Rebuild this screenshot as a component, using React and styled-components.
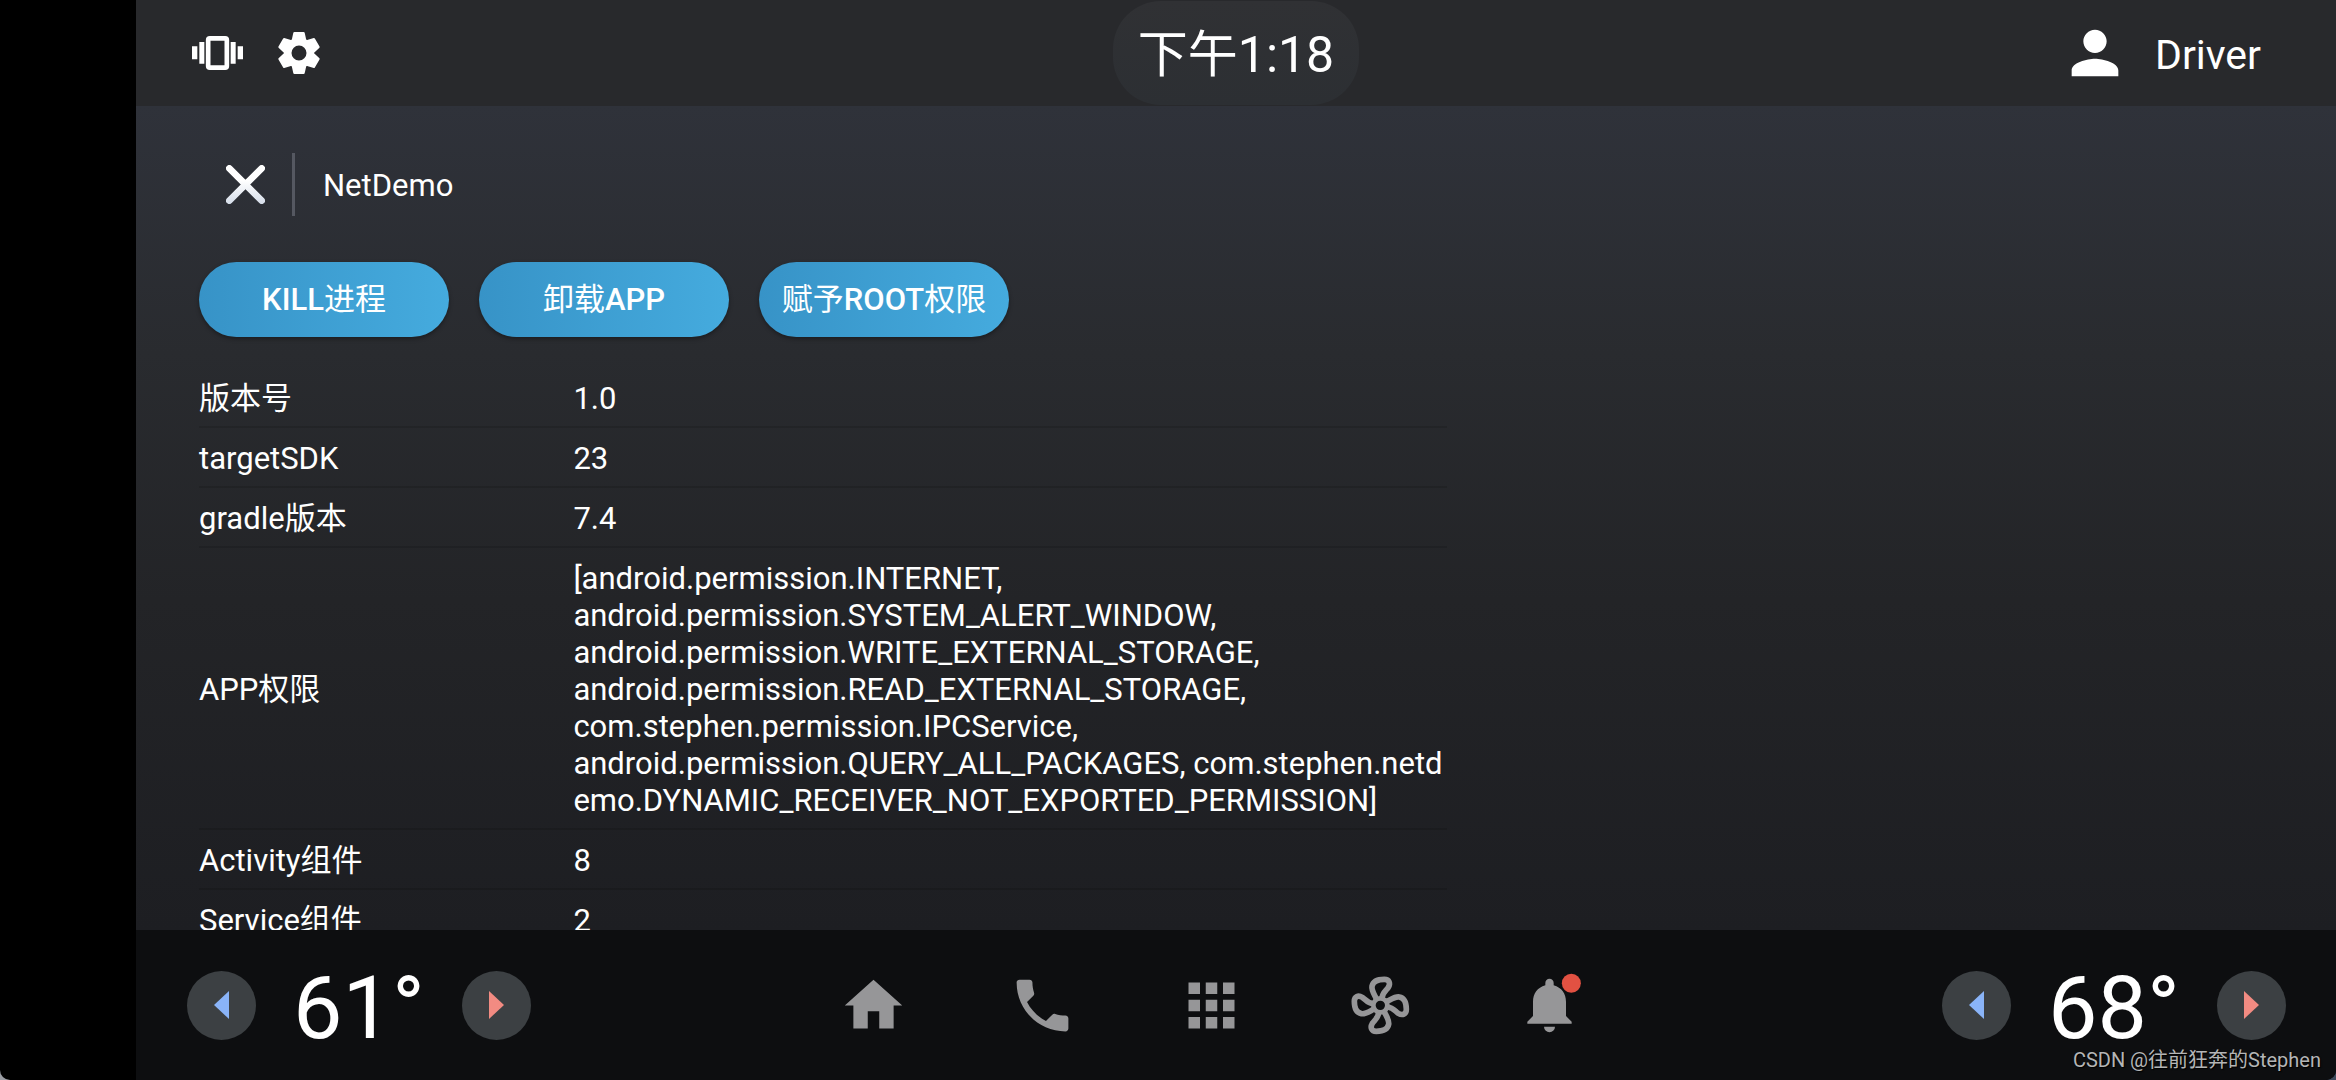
import React from 'react'
import { MdApps, MdHome, MdPerson, MdPhone } from 'react-icons/md'
import styled, { createGlobalStyle } from 'styled-components'

const GlobalStyle = createGlobalStyle`
  * {
    box-sizing: border-box;
  }

  body {
    background: linear-gradient(90deg, #9a9da3, #3d4a5c);
    color: #fff;
    font-family: Roboto, 'Noto Sans CJK SC', sans-serif;
    font-size: 31px;
    line-height: 37px;
    margin: 0;
  }
`

const Screen = styled.div`
  background: #000;
  border-radius: 0 0 10px 10px;
  display: grid;
  grid-template-rows: auto minmax(0, 1fr) auto;
  height: 100vh;
  overflow: hidden;
  padding-left: 136px;
  position: relative;
`

const IconButton = styled.button`
  align-items: center;
  background: none;
  border: 0;
  color: inherit;
  cursor: pointer;
  display: flex;
  justify-content: center;
  padding: 0;
`

const StatusBar = styled.header`
  align-items: center;
  background: #28292c;
  display: grid;
  grid-template-columns: 1fr auto 1fr;
  height: 106px;
  padding: 0 75px 0 56px;
`

const StatusIcons = styled.div`
  display: flex;
  gap: 35px;
`

const Clock = styled.time`
  background: linear-gradient(#303134, #2c2f33);
  border-radius: 48px;
  font-size: 50px;
  line-height: 100px;
  margin-left: 19px;
  padding: 4px 25px 0;
`

const Profile = styled(IconButton)`
  font-family: inherit;
  font-size: 41px;
  gap: 25px;
  justify-self: end;
  line-height: 70px;
`

const ProfileName = styled.span`
  padding-top: 4px;
`

const Details = styled.main`
  background: linear-gradient(#2f323a, #292b2f 30%, #232427 60%, #1d1e22);
  overflow-y: auto;
  padding: 47px 63px 0;
  scrollbar-width: none;
`

const TitleRow = styled.div`
  align-items: center;
  display: flex;
  padding-left: 27px;
`

const Title = styled.h1`
  border-left: 3px solid #555861;
  font-size: inherit;
  font-weight: 400;
  line-height: 61px;
  margin: 0 0 0 27px;
  padding: 2px 0 0 28px;
`

const Actions = styled.div`
  display: flex;
  gap: 30px;
  margin: 46px 0 31px;
`

const ActionButton = styled.button`
  background: linear-gradient(90deg, #3793c7, #45abde);
  border: 0;
  border-radius: 38px;
  box-shadow: 0 2px 4px rgba(0, 0, 0, 0.35);
  color: #fff;
  cursor: pointer;
  font: inherit;
  height: 75px;
  padding: 0;
  width: 250px;

  strong {
    font-weight: 500;
  }
`

const InfoTable = styled.table`
  border-collapse: separate;
  border-spacing: 0;
  max-width: 1248px;
  table-layout: fixed;
  width: 100%;

  th,
  td {
    border-bottom: 2px solid rgba(0, 0, 0, 0.12);
    font-weight: 400;
    padding: 12px 0 9px;
    text-align: left;
    vertical-align: middle;
  }

  th {
    width: 30%;
  }

  td {
    white-space: pre-line;
  }
`

const Dock = styled.footer`
  align-items: center;
  background: #0d0e10;
  display: flex;
  height: 150px;
  padding: 0 50px 0 51px;
`

const Climate = styled.div`
  align-items: center;
  display: flex;
  justify-content: space-between;
  width: 344px;
`

const TempButton = styled(IconButton)`
  background: #3c4043;
  border-radius: 50%;
  color: ${props => (props.$warm ? '#f28b82' : '#8ab4f8')};
  height: 69px;
  width: 69px;
`

const Temperature = styled.output`
  font-size: 88px;
  line-height: 104px;
  padding-top: 6px;
`

const DockNav = styled.nav`
  display: flex;
  flex: 1;
  justify-content: center;
  padding-right: 50px;
`

const NavButton = styled(IconButton)`
  color: #969698;
  height: 104px;
  width: 169px;
`

const Watermark = styled.span`
  bottom: 8px;
  color: #b4b5b6;
  font-size: 20px;
  line-height: 24px;
  position: absolute;
  right: 15px;
  text-shadow: 1px 1px 1px #000;
`

const VibrateIcon = () => (
  <svg fill="currentColor" height="36" viewBox="0 0 153 108" width="51">
    <path d="M0 34h16v39H0zM22 21h15v65H22zM116 21h15v65h-15zM137 34h16v39h-16z" />
    <rect
      fill="none"
      height="88"
      rx="5"
      stroke="currentColor"
      strokeWidth="14"
      width="56"
      x="48.5"
      y="10"
    />
  </svg>
)

const GearIcon = () => (
  <svg height="42" viewBox="-63 -63 126 126" width="42">
    <g fill="currentColor">
      {[0, 60, 120, 180, 240, 300].map(angle => (
        <path
          d="M-24-25L-21-43L-17-61Q-16-63-14-63H14Q16-63 17-61L21-43L24-25Z"
          key={angle}
          transform={`rotate(${angle})`}
        />
      ))}
    </g>
    <circle fill="none" r="34" stroke="currentColor" strokeWidth="23" />
  </svg>
)

const CloseIcon = () => (
  <svg height="39" viewBox="0 0 117 117" width="39">
    <defs>
      <linearGradient
        gradientUnits="userSpaceOnUse"
        id="close-fill"
        x1="0"
        x2="0"
        y1="0"
        y2="117"
      >
        <stop offset="0.4" stopColor="#fff" />
        <stop offset="1" stopColor="#d5dde9" />
      </linearGradient>
    </defs>
    <path
      d="M10 10L107 107M107 10L10 107"
      stroke="url(#close-fill)"
      strokeLinecap="round"
      strokeWidth="20"
    />
  </svg>
)

const ArrowIcon = ({ right }) => (
  <svg fill="currentColor" height="28" viewBox="0 0 15 28" width="15">
    <path d={right ? 'M0 0L15 14L0 28Z' : 'M15 0L0 14L15 28Z'} />
  </svg>
)

const FanIcon = () => (
  <svg
    fill="none"
    height="69"
    stroke="currentColor"
    strokeWidth="17"
    viewBox="-103 -103 207 207"
    width="69"
  >
    <circle r="21" strokeWidth="14" />
    {[0, 90, 180, 270].map(angle => (
      <path
        d="M-12-20C-19-34-27-45-25-57C-22-73-5-78 12-78C27-78 31-66 24-54C18-45 6-38 5-22"
        key={angle}
        transform={`rotate(${angle})`}
      />
    ))}
  </svg>
)

const BellIcon = () => (
  <svg fill="currentColor" height="69" viewBox="0 0 207 207" width="69">
    <path d="M91 43V36a12 12 0 0 1 25 0V43C140 50 153 68 153 92V135L170 152V158H37V152L54 135V92C54 68 67 50 91 43Z" />
    <path d="M87 167H120a16.500 16.500 0 0 1-33 0Z" />
    <circle cx="169" cy="37" fill="#e25142" r="28.500" />
  </svg>
)

const permissions = `[android.permission.INTERNET,
android.permission.SYSTEM_ALERT_WINDOW,
android.permission.WRITE_EXTERNAL_STORAGE,
android.permission.READ_EXTERNAL_STORAGE,
com.stephen.permission.IPCService,
android.permission.QUERY_ALL_PACKAGES, com.stephen.netd
emo.DYNAMIC_RECEIVER_NOT_EXPORTED_PERMISSION]`

const appInfo = [
  ['版本号', '1.0'],
  ['targetSDK', '23'],
  ['gradle版本', '7.4'],
  ['APP权限', permissions],
  ['Activity组件', '8'],
  ['Service组件', '2'],
]

const navItems = [
  { label: 'Home', icon: <MdHome size={69} /> },
  { label: 'Phone', icon: <MdPhone size={69} /> },
  { label: 'Apps', icon: <MdApps size={69} /> },
  { label: 'Climate', icon: <FanIcon /> },
  { label: 'Notifications', icon: <BellIcon /> },
]

const ClimateControl = ({ side, value }) => (
  <Climate>
    <TempButton aria-label={`${side} cooler`}>
      <ArrowIcon />
    </TempButton>
    <Temperature>{value}°</Temperature>
    <TempButton $warm aria-label={`${side} warmer`}>
      <ArrowIcon right />
    </TempButton>
  </Climate>
)

const App = () => (
  <>
    <GlobalStyle />
    <Screen>
      <StatusBar>
        <StatusIcons>
          <IconButton aria-label="Vibrate">
            <VibrateIcon />
          </IconButton>
          <IconButton aria-label="Settings">
            <GearIcon />
          </IconButton>
        </StatusIcons>
        <Clock>下午1:18</Clock>
        <Profile>
          <MdPerson size={70} />
          <ProfileName>Driver</ProfileName>
        </Profile>
      </StatusBar>
      <Details>
        <TitleRow>
          <IconButton aria-label="Close">
            <CloseIcon />
          </IconButton>
          <Title>NetDemo</Title>
        </TitleRow>
        <Actions>
          <ActionButton>
            <strong>KILL</strong>进程
          </ActionButton>
          <ActionButton>
            卸载<strong>APP</strong>
          </ActionButton>
          <ActionButton>
            赋予<strong>ROOT</strong>权限
          </ActionButton>
        </Actions>
        <InfoTable>
          <tbody>
            {appInfo.map(([name, value]) => (
              <tr key={name}>
                <th scope="row">{name}</th>
                <td>{value}</td>
              </tr>
            ))}
          </tbody>
        </InfoTable>
      </Details>
      <Dock>
        <ClimateControl side="Left" value={61} />
        <DockNav>
          {navItems.map(({ label, icon }) => (
            <NavButton aria-label={label} key={label}>
              {icon}
            </NavButton>
          ))}
        </DockNav>
        <ClimateControl side="Right" value={68} />
      </Dock>
      <Watermark>CSDN @往前狂奔的Stephen</Watermark>
    </Screen>
  </>
)

export default App
